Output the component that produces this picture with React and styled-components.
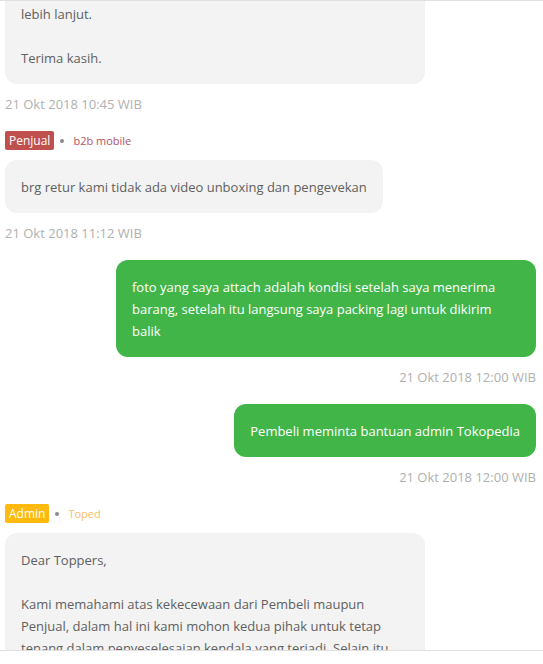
import { useEffect, useRef } from "react";
import styled, { createGlobalStyle } from "styled-components";

const messages = [
  {
    id: 1,
    side: "left",
    role: "admin",
    sender: "Toped",
    lines: [
      "Dear Toppers,",
      "",
      "Mohon maaf atas ketidaknyamanan yang terjadi. Kami akan meneruskan kendala ini kepada tim terkait agar dapat ditindaklanjuti",
      "lebih lanjut.",
      "",
      "Terima kasih.",
    ],
    time: "21 Okt 2018 10:45 WIB",
  },
  {
    id: 2,
    side: "left",
    role: "seller",
    sender: "b2b mobile",
    lines: ["brg retur kami tidak ada video unboxing dan pengevekan"],
    time: "21 Okt 2018 11:12 WIB",
  },
  {
    id: 3,
    side: "right",
    lines: [
      "foto yang saya attach adalah kondisi setelah saya menerima barang, setelah itu langsung saya packing lagi untuk dikirim balik",
    ],
    time: "21 Okt 2018 12:00 WIB",
  },
  {
    id: 4,
    side: "right",
    lines: ["Pembeli meminta bantuan admin Tokopedia"],
    time: "21 Okt 2018 12:00 WIB",
  },
  {
    id: 5,
    side: "left",
    role: "admin",
    sender: "Toped",
    lines: [
      "Dear Toppers,",
      "",
      "Kami memahami atas kekecewaan dari Pembeli maupun Penjual, dalam hal ini kami mohon kedua pihak untuk tetap tenang dalam penyeselesaian kendala yang terjadi. Selain itu kami juga akan membantu menyelesaikan kendala ini secepatnya.",
    ],
    time: "21 Okt 2018 12:30 WIB",
  },
];

const roles = {
  seller: { label: "Penjual", badge: "#c0504d", name: "#b5525c" },
  admin: { label: "Admin", badge: "#ffba0d", name: "#f9be6a" },
};

const App = () => {
  const listRef = useRef(null);
  const firstRef = useRef(null);

  // scroll so the first bubble ends where the reference cuts it
  useEffect(() => {
    const list = listRef.current;
    const first = firstRef.current;
    if (list && first) {
      list.scrollTop = first.offsetTop + first.offsetHeight - 83;
    }
  }, []);

  return (
    <>
      <GlobalStyle />
      <ChatList ref={listRef}>
        {messages.map((msg, i) => (
          <Group key={msg.id} $side={msg.side}>
            {msg.role && (
              <Header>
                <Badge $color={roles[msg.role].badge}>
                  {roles[msg.role].label}
                </Badge>
                <Dot />
                <Sender $color={roles[msg.role].name}>{msg.sender}</Sender>
              </Header>
            )}
            <Bubble $side={msg.side} ref={i === 0 ? firstRef : null}>
              {msg.lines.map((line, j) => (
                <Line key={j}>{line || "\u00a0"}</Line>
              ))}
            </Bubble>
            <Time>{msg.time}</Time>
          </Group>
        ))}
      </ChatList>
    </>
  );
};

const GlobalStyle = createGlobalStyle`
  body {
    margin: 0;
    background: #fff;
    font-family: "Open Sans", "Noto Sans", sans-serif;
  }
`;

const ChatList = styled.div`
  position: relative;
  height: 649px;
  overflow: hidden;
  border-top: 1px solid #e0e0e0;
  border-bottom: 1px solid #e0e0e0;
  padding: 0 7px 0 5px;
`;

const Group = styled.div`
  display: flex;
  flex-direction: column;
  align-items: ${(p) => (p.$side === "right" ? "flex-end" : "flex-start")};

  & + & {
    margin-top: ${(p) => (p.$side === "right" ? "18px" : "20px")};
  }
`;

const Header = styled.div`
  display: flex;
  align-items: center;
  margin-bottom: 10px;
`;

const Badge = styled.span`
  background: ${(p) => p.$color};
  color: #fff;
  font-size: 12px;
  line-height: 19px;
  padding: 0 4px;
  border-radius: 2px;
`;

const Dot = styled.span`
  width: 4px;
  height: 4px;
  border-radius: 50%;
  background: #8a8a8a;
  margin: 0 9px 0 6px;
`;

const Sender = styled.span`
  font-size: 11px;
  color: ${(p) => p.$color};
`;

const Bubble = styled.div`
  max-width: 388px;
  padding: 16px 16px 15px;
  border-radius: 12px;
  font-size: 13px;
  line-height: 22px;
  background: ${(p) => (p.$side === "right" ? "#42b549" : "#f3f3f3")};
  color: ${(p) => (p.$side === "right" ? "#fff" : "#606060")};
`;

const Line = styled.div``;

const Time = styled.div`
  margin-top: 11px;
  font-size: 13px;
  line-height: 18px;
  color: #b0b0b0;
`;

export default App;
